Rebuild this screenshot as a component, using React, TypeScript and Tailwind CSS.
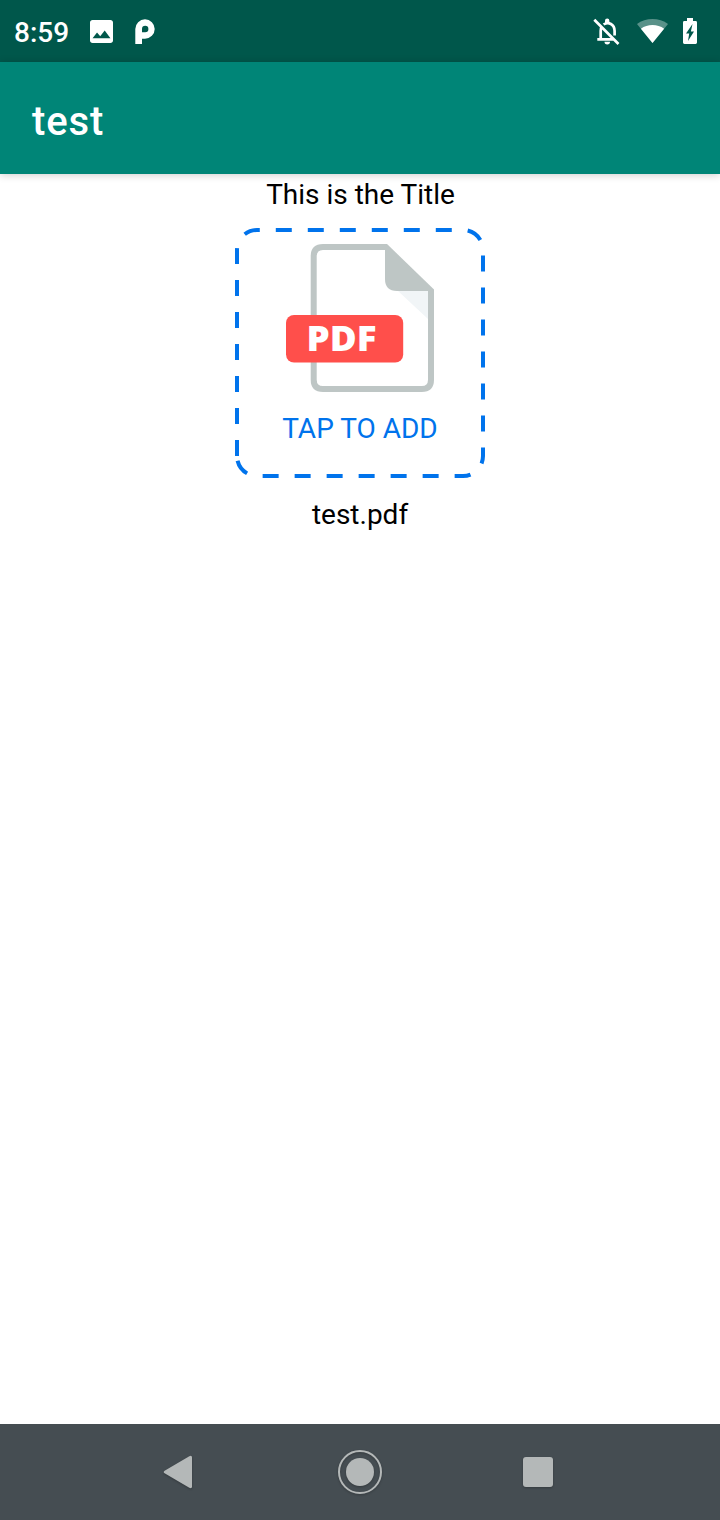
function StatusBar() {
  return (
    <header className="flex h-[62px] shrink-0 items-center justify-between bg-[#00574b] pl-3.5 pr-[23px] text-white">
      <div className="flex items-center">
        <span className="w-[75.500px] pt-1 text-[28px] leading-8 font-medium">8:59</span>
        <svg className="block h-[23px] w-[23px]" viewBox="3 3 18 18" fill="currentColor">
          <path d="M21 19V5c0-1.100-.9-2-2-2H5c-1.100 0-2 .9-2 2v14c0 1.100.9 2 2 2h14c1.100 0 2-.9 2-2zM8.500 12.800l2.500 3L14.500 11.300l4.500 6H5l3.500-4.500z" />
        </svg>
        <svg className="ml-[22.500px] block h-[25px] w-5" viewBox="0 0 20 25" fill="currentColor" fillRule="evenodd">
          <path d="M.3 25V10A9.700 9.700 0 0 1 10 .3a9.700 9.700 0 0 1 0 19.400H7V25zM7 13.200V10a3.200 3.200 0 1 1 3.200 3.200z" />
        </svg>
      </div>
      <div className="flex items-center">
        <svg className="block h-[30px] w-[30px]" viewBox="0 0 30 30" fill="none" stroke="currentColor" strokeWidth="2.700">
          <path d="M2.300 3.800 26.500 28M5.300 23.300H22M8.700 23V15c0-1.900.3-3.300 1.200-4.700M11.600 8.500C16.500 5 22.600 8.500 22.600 15v4.500" />
          <path d="M13 8V4.700a2.200 2.200 0 0 1 4.400 0V8zM12.500 25.800h5.500a2.700 2.700 0 0 1-5.500 0z" fill="currentColor" stroke="none" />
        </svg>
        <svg className="ml-[15px] block h-6 w-[31px]" viewBox="0 0 31 24" fill="currentColor">
          <path opacity=".35" d="M15.500 24 0 5C8.500-1.600 22.500-1.600 31 5z" />
          <path d="M15.500 24 3.900 9.700c6.500-5 16.700-5 23.200 0z" />
        </svg>
        <svg className="ml-[15px] block h-[26px] w-3.5" viewBox="0 0 14 26" fill="currentColor" fillRule="evenodd">
          <path d="M4 0h6v3h2.600Q14 3 14 4.400v20.200Q14 26 12.600 26H1.400Q0 26 0 24.600V4.400Q0 3 1.400 3H4zM9.500 6 3 15.500h3.200L5 23l6-9.500H7.900z" />
        </svg>
      </div>
    </header>
  );
}

function PdfIcon() {
  return (
    <svg className="block h-[148px] w-[148px]" viewBox="286 244 148 148">
      <path d="M398 291h30v28z" fill="#f1f5f7" />
      <path d="M387 247h-64q-9.300 0-9.300 9.300v123.400q0 9.300 9.300 9.300h98.700q9.300 0 9.300-9.300V290" fill="none" stroke="#bec6c5" strokeWidth="6" />
      <path d="M385 244h2l47 45.500v1.500h-37q-12 0-12-12z" fill="#bec6c5" />
      <rect x="286" y="315" width="117.200" height="47.500" rx="8" fill="#ff4f4b" />
      <text x="306.500" y="350.500" textLength="70" lengthAdjust="spacingAndGlyphs" fontSize="35.500" fontWeight="800" fill="#fff" fontFamily="Open Sans, sans-serif">PDF</text>
    </svg>
  );
}

function UploadCard() {
  return (
    <button className="relative mt-[17px] flex h-[250px] w-[250px] flex-col items-center pt-4 text-[#0073ec]">
      <svg className="absolute inset-0 h-[250px] w-[250px]" viewBox="0 0 250 250" fill="none">
        <path d="M2 228V22A20 20 0 0 1 22 2H228A20 20 0 0 1 248 22V228A20 20 0 0 1 228 248H22A20 20 0 0 1 2 228" stroke="currentColor" strokeWidth="4" strokeDasharray="16 16" />
      </svg>
      <PdfIcon />
      <span className="mt-[21px] text-[28px] leading-8">TAP TO ADD</span>
    </button>
  );
}

function NavBar() {
  return (
    <nav className="flex h-24 shrink-0 items-center justify-center bg-[#454d52] text-[#b4b8b8]">
      <svg className="block h-12 w-[396px] drop-shadow-[0_1px_1px_rgba(0,0,0,0.25)]" viewBox="162 1448 396 48" fill="currentColor">
        <path d="M164.600 1470.700 189.300 1456.200Q192 1455 192 1457.500v29q0 2.500-2.700 1.300L164.600 1473.300q-1.800-1.300 0-2.600z" />
        <circle cx="360" cy="1472" r="21" fill="none" stroke="currentColor" strokeWidth="2" />
        <circle cx="360" cy="1472" r="14" />
        <rect x="523" y="1457" width="30" height="30" rx="3" />
      </svg>
    </nav>
  );
}

export default function App() {
  return (
    <div className="flex h-[1520px] w-[720px] flex-col bg-white font-['Roboto',sans-serif] text-black">
      <StatusBar />
      <div className="z-10 flex h-28 shrink-0 items-center bg-[#008577] px-8 pt-[7px] text-white shadow-[0_1px_8px_rgba(0,0,0,0.2)]">
        <h1 className="text-[40px] leading-[48px] font-medium tracking-[0.9px]">test</h1>
      </div>
      <main className="flex flex-1 flex-col items-center pt-1">
        <h2 className="pt-px pl-px text-[28px] leading-8">This is the Title</h2>
        <UploadCard />
        <p className="mt-[21px] text-[28px] leading-8">test.pdf</p>
      </main>
      <NavBar />
    </div>
  );
}
